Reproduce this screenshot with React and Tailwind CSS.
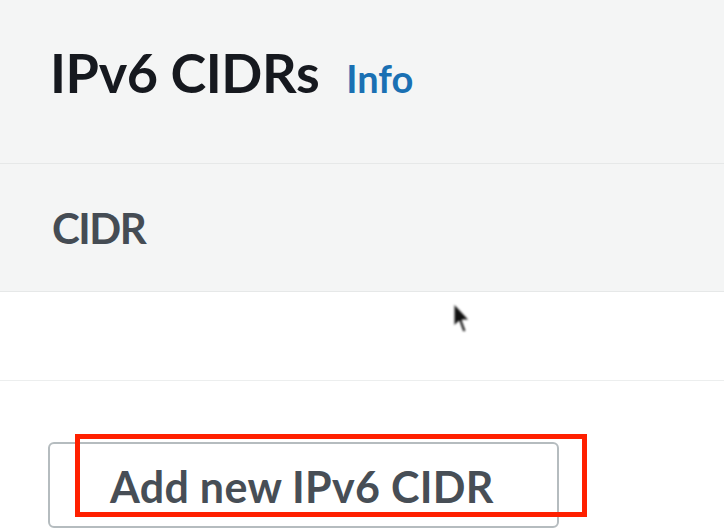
export default function App() {
  return (
    <div className="relative h-[530px] w-[724px] overflow-hidden bg-white font-['Lato','Open_Sans',sans-serif]">
      {/* Panel header */}
      <div className="h-[164px] border-b border-[#e6e8e8] bg-[#f4f5f5] px-[50px] pt-[46px]">
        <div className="flex items-baseline gap-[27px]">
          <h2 className="text-[54px] font-bold leading-none tracking-[-0.4px] text-[#16191f]">IPv6 CIDRs</h2>
          <span className="text-[38px] font-bold leading-none text-[#1a70b3]">Info</span>
        </div>
      </div>

      {/* Table head */}
      <div className="h-[128px] border-b border-[#e6e8e8] bg-[#f4f5f5] px-[52px] pt-[43px]">
        <span className="text-[42px] font-bold leading-none tracking-[-1.5px] text-[#454c54]">CIDR</span>
      </div>

      {/* Empty row */}
      <div className="h-[89px] border-b border-[#eceeee] bg-white"></div>

      {/* Add button */}
      <div className="px-[48px] pt-[61px]">
        <button className="flex h-[86px] w-[511px] items-start rounded-md border-2 border-[#b5bcbf] bg-white pl-[60px] pt-[21px] text-left">
          <span className="block text-[43px] font-bold leading-none tracking-[0.3px] text-[#474e56]">Add new IPv6 CIDR</span>
        </button>
      </div>

      {/* Annotation highlight */}
      <div className="absolute left-[75px] top-[434px] h-[83px] w-[512px] border-[5px] border-[#ff2000]"></div>

      {/* Mouse pointer */}
      <svg className="absolute left-[452px] top-[302px] blur-[1px]" width="20" height="36" viewBox="0 0 20 36">
        <path d="M2 2 L2 24 L7 19 L11 30 L14 29 L10 18 L17 18 Z" fill="#111" stroke="#fff" strokeWidth="1" />
      </svg>
    </div>
  );
}
